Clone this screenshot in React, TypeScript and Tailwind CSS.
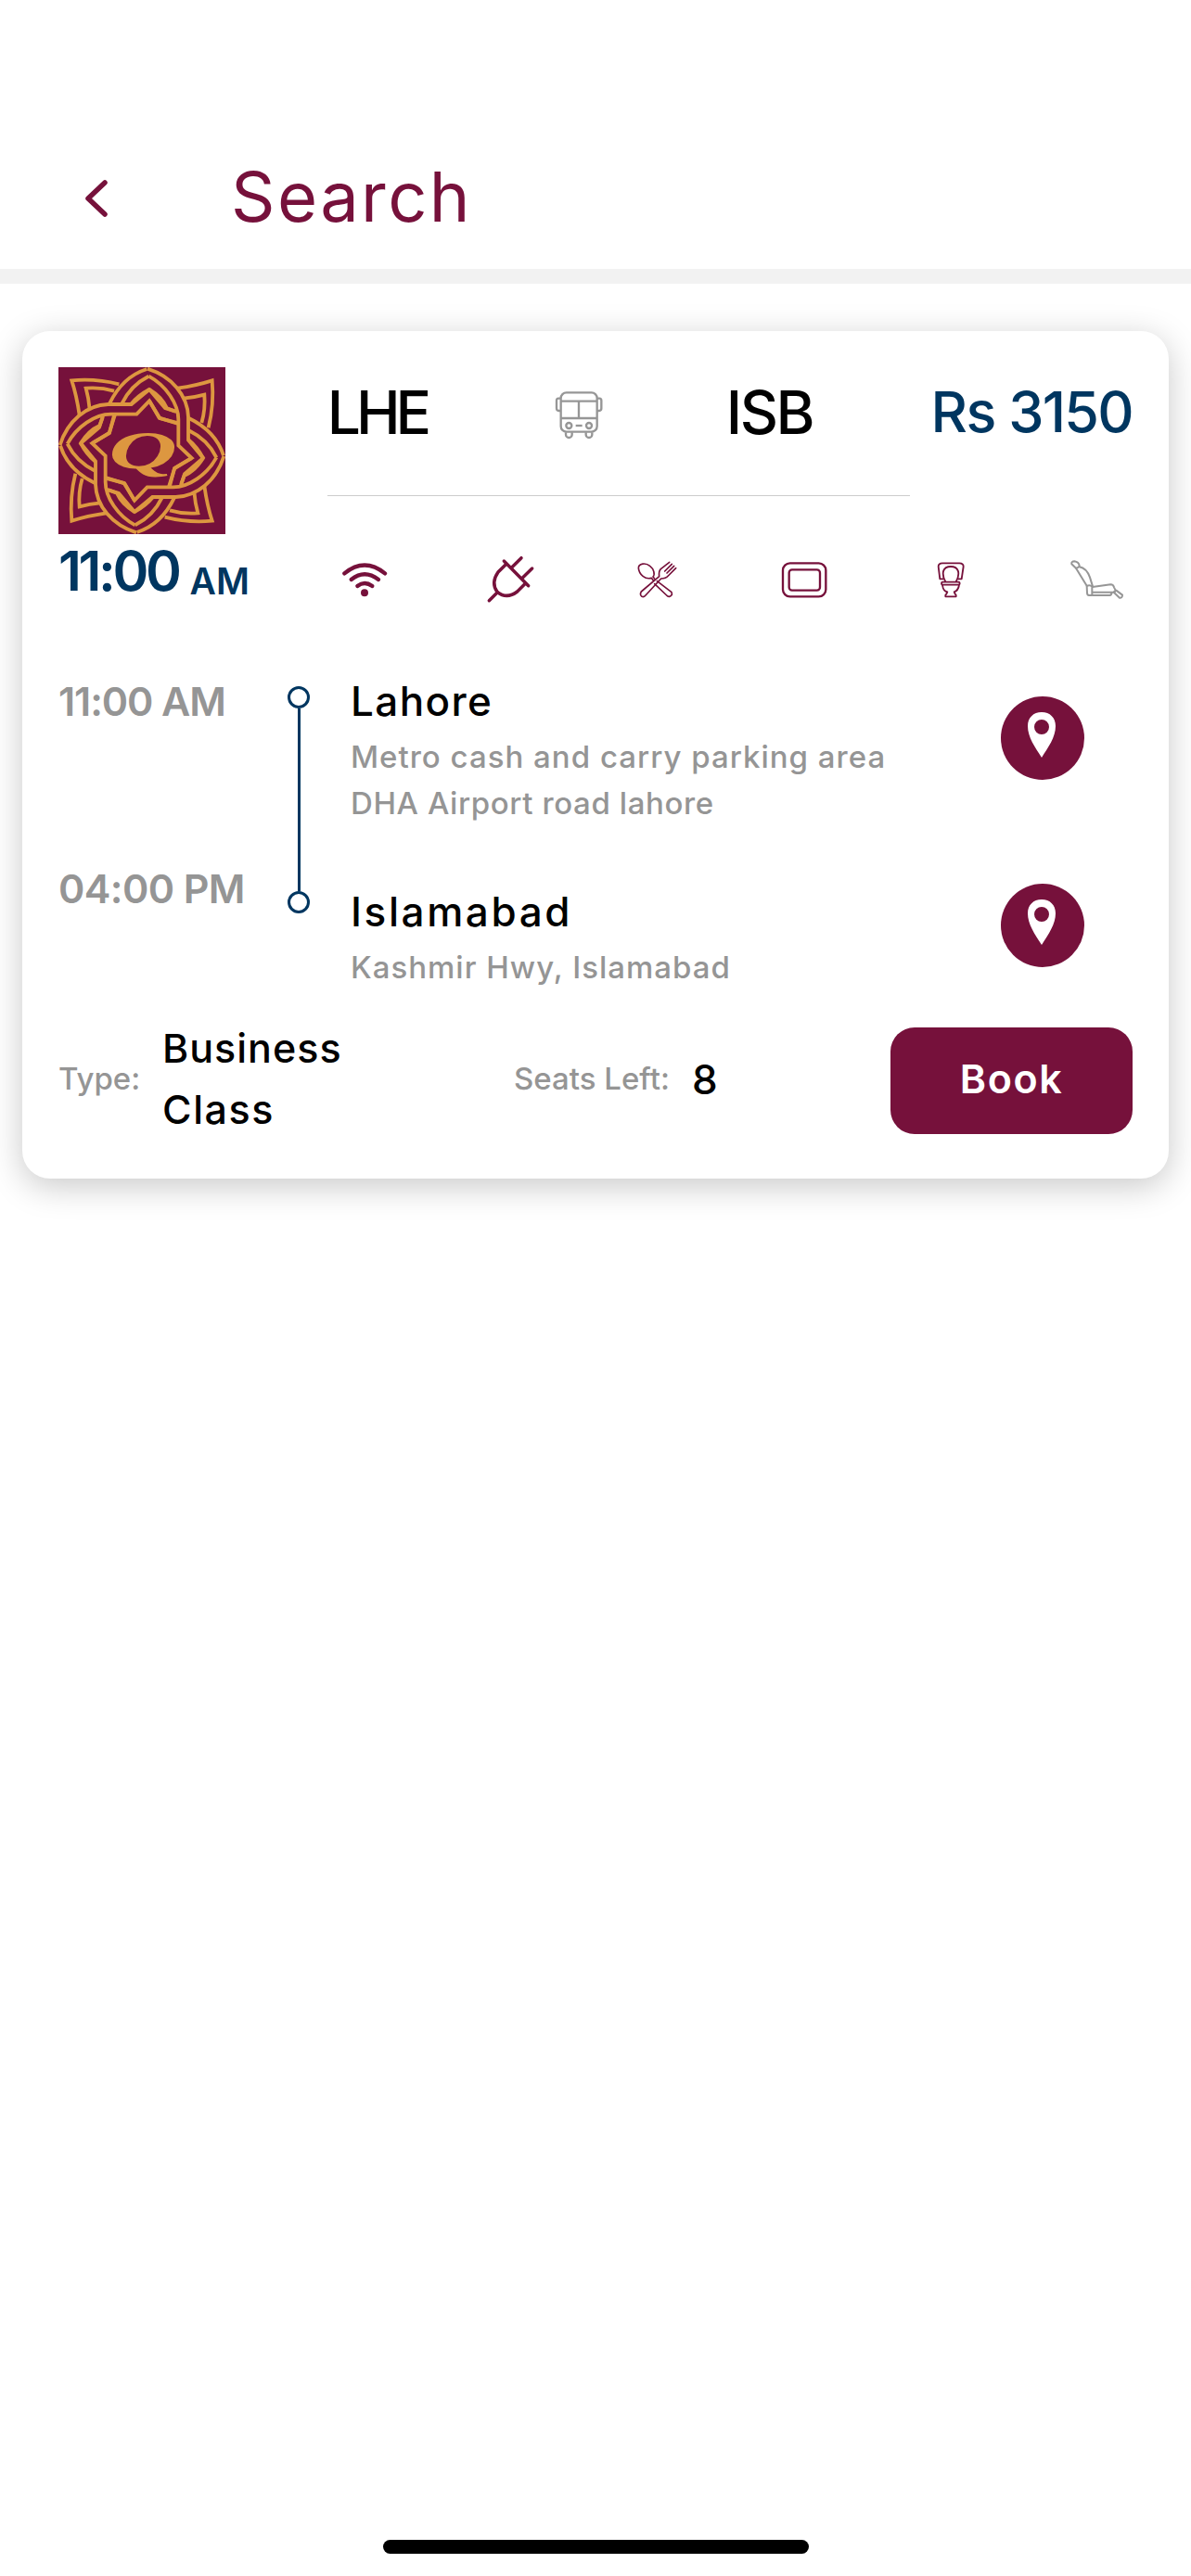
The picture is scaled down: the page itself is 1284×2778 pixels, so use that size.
import type { ReactNode } from "react";

const stops = [
  {
    city: "Lahore",
    cityTracking: "tracking-[1.4px]",
    address: [
      { text: "Metro cash and carry parking area", tracking: "tracking-[1px]" },
      { text: "DHA Airport road lahore", tracking: "tracking-[0.6px]" },
    ],
  },
  {
    city: "Islamabad",
    cityTracking: "tracking-[2.6px]",
    address: [{ text: "Kashmir Hwy, Islamabad", tracking: "tracking-[1px]" }],
  },
];

function BackIcon() {
  return (
    <svg className="mt-[3px] h-[44px] w-[28px]" viewBox="0 0 28 44" fill="none" stroke="#76113b" strokeWidth="5.5" strokeLinecap="round" strokeLinejoin="round">
      <path d="M24 5 L6 22 L24 39" />
    </svg>
  );
}

function OperatorLogo() {
  return (
    <svg className="h-[180px] w-[180px] bg-[#76113b]" viewBox="39 48 540 540" fill="none" stroke="#dd9740" strokeWidth="11.5" strokeLinejoin="miter">
      {[0, 90, 180, 270].map((angle) => (
        <g key={angle} transform={`rotate(${angle} 309 318)`}>
          <path d="M235 103 Q160 84 82 91 Q98 140 107 203" />
          <path d="M219 125 Q175 112 128 116 Q137 148 140 184" />
          <path d="M44 300 C68 222 130 170 200 168 L275 168 L333 120 Q374 145 390 181 L417 191" />
          <path d="M68 296 C98 240 158 200 208 200 L292 200 L333 157 L367 213 L427 229" />
          <path d="M325 54 Q246 79 204 166" />
          <path d="M331 77 Q273 106 244 166" />
          <path d="M333 120 Q297 139 273 168" />
          <path d="M222 201 L203 262 L148 294" />
          <path d="M183 206 L171 243 L111 294" />
        </g>
      ))}
      <text
        transform="translate(202 374) scale(1.78 1)"
        className="font-['Liberation_Serif',serif] text-[172px] font-bold italic"
        fill="#dd9740"
        stroke="none"
      >
        Q
      </text>
    </svg>
  );
}

function BusIcon() {
  return (
    <svg className="mt-[7px] h-[54px] w-[54px]" viewBox="110 66 162 162" fill="none" stroke="#969696" strokeWidth="7">
      <rect x="133" y="73" width="117" height="127" rx="18" />
      <path d="M134 101 H249 M134 156 H249 M191 101 V156" />
      <path d="M133 92 H125 Q119 92 119 99 V124 Q119 132 126 132 H133 M250 92 H258 Q264 92 264 99 V124 Q264 132 257 132 H250" />
      <circle cx="159" cy="180" r="9" />
      <circle cx="224" cy="180" r="9" />
      <path d="M181 180 H202" />
      <path d="M149 202 V209 A9 9 0 0 0 169 209 V202 M214 202 V209 A9 9 0 0 0 234 209 V202" />
    </svg>
  );
}

function WifiIcon() {
  return (
    <svg className="h-[40px] w-[50px]" viewBox="80 75 150 120" fill="none" stroke="#76113b" strokeWidth="13" strokeLinecap="round">
      <path d="M90 115 Q155 62 221 115" />
      <path d="M112 135 Q155 101 200 135" />
      <path d="M132 156 Q155 138 180 156" />
      <circle cx="155" cy="178" r="12" fill="#76113b" stroke="none" />
    </svg>
  );
}

function PlugIcon() {
  return (
    <svg className="h-[54px] w-[54px]" viewBox="553 55 162 162" fill="none" stroke="#76113b" strokeWidth="10.5" strokeLinecap="round">
      <path d="M611 76 L690 156 M636 97 L667 66 M669 132 L702 100 M563 204 L590 177" />
      <path d="M617 87 L592 112 Q568 146 589 176 Q620 201 654 175 L680 149" />
    </svg>
  );
}

function FoodIcon() {
  return (
    <svg className="h-[42px] w-[45px]" viewBox="79 72 135 126" fill="none" stroke="#76113b" strokeWidth="5" strokeLinecap="round" strokeLinejoin="round">
      <path d="M128 130 C108 136 88 119 86 98 C86 82 110 80 123 91 C136 101 140 118 133 126 L138 132 M128 130 L134 138 M146 140 L193 176 Q197 187 186 190 Q181 191 177 186 L138 149" />
      <path d="M186 79 L158 101 Q151 108 153 125 L95 174 Q89 184 97 190 Q103 193 109 186 L159 132 Q174 132 182 123 L207 98 M194 85 L171 108 M201 91 L178 114 M123 150 L119 154" />
    </svg>
  );
}

function ScreenIcon() {
  return (
    <svg className="h-[40px] w-[50px]" viewBox="545 73 150 120" fill="none" stroke="#76113b" strokeWidth="7">
      <rect x="551" y="80" width="139" height="108" rx="23" />
      <rect x="571" y="101" width="100" height="67" rx="10" />
    </svg>
  );
}

function ToiletIcon() {
  return (
    <svg className="h-[40px] w-[30px]" viewBox="150 73 90 120" fill="none" stroke="#76113b" strokeWidth="5.5" strokeLinejoin="round">
      <path d="M172 131 H160 L155 91 Q155 80 168 80 H223 Q236 80 236 91 L230 131 H218" />
      <path d="M178 140 C163 112 170 91 195 91 C220 91 227 112 212 140" />
      <rect x="165" y="141" width="59" height="9" rx="4" />
      <path d="M168 151 Q170 170 184 173 Q182 180 178 183 V188 H212 V183 Q208 180 206 173 Q219 169 222 151" />
    </svg>
  );
}

function ReclinerIcon() {
  return (
    <svg className="h-[42px] w-[60px]" viewBox="582 70 180 126" fill="none" stroke="#969696" strokeWidth="6" strokeLinejoin="round">
      <path d="M603 96 L589 83 Q587 74 598 74 Q612 76 614 88 Q614 94 603 96 Z" />
      <path d="M603 96 L638 153 M614 92 Q637 96 648 126 L657 155" />
      <path d="M638 154 Q648 149 655 156 V184 H645 Q639 184 639 176 Z" />
      <path d="M656 157 L715 149 Q724 149 726 158 L731 168 L724 174 H656 M656 184 H712 Q718 184 719 174" />
      <path d="M733 168 L753 183 Q753 193 744 192 L726 175 Z" />
    </svg>
  );
}

function LocationButton() {
  return (
    <button className="flex h-[90px] w-[90px] justify-center rounded-full bg-[#76113b] pt-[17px] pr-[2px]" aria-label="Show on map">
      <svg className="h-[49px] w-[30px]" viewBox="0 0 30 49">
        <path
          fill="#fff"
          fillRule="evenodd"
          d="M15 0 C6 0 0 6 0 15 C0 27 8 38 15 49 C22 38 30 27 30 15 C30 6 24 0 15 0 Z M15 8 A8 8 0 1 1 15 24 A8 8 0 1 1 15 8 Z"
        />
      </svg>
    </button>
  );
}

function Amenity({ children }: { children: ReactNode }) {
  return <div className="flex h-[60px] w-[76px] items-center justify-center">{children}</div>;
}

export default function App() {
  return (
    <div className="flex h-[2778px] w-[1284px] flex-col bg-white font-['Inter',sans-serif] font-medium whitespace-nowrap text-black">
      <header className="flex h-[306px] items-center border-b-[16px] border-[#f2f2f2] pt-[134px] pl-[89px] text-[#76113b]">
        <BackIcon />
        <h1 className="ml-[132px] text-[74px] leading-none font-normal tracking-[2.4px]">Search</h1>
      </header>

      <main className="mx-6 mt-[51px] h-[914px] rounded-[30px] bg-white px-[39px] pt-[39px] shadow-[0_8px_36px_rgba(0,0,0,0.22)]">
        <section className="flex h-[261px]">
          <div className="w-[290px]">
            <OperatorLogo />
            <div className="flex h-[81px] items-center font-semibold text-[#003660]">
              <span className="text-[59px] tracking-[-3.4px]">11:00</span>
              <span className="ml-[12px] pt-[21px] text-[39px]">AM</span>
            </div>
          </div>
          <div className="w-[869px]">
            <div className="flex h-[97px] items-center">
              <span className="w-[244px] text-[64px] tracking-[-5px]">LHE</span>
              <BusIcon />
              <span className="ml-[132px] text-[64px] tracking-[-2.5px]">ISB</span>
              <span className="ml-auto text-[61px] tracking-[-1.7px] text-[#003660]">Rs 3150</span>
            </div>
            <div className="mt-[41px] h-px w-[628px] bg-[#cccccc]" />
            <div className="mt-[60px] flex justify-between pl-[2px]">
              <Amenity><WifiIcon /></Amenity>
              <Amenity><PlugIcon /></Amenity>
              <Amenity><FoodIcon /></Amenity>
              <Amenity><ScreenIcon /></Amenity>
              <Amenity><ToiletIcon /></Amenity>
              <Amenity><ReclinerIcon /></Amenity>
            </div>
          </div>
        </section>

        <section className="mt-[69px] flex h-[342px]">
          <div className="flex w-[247px] flex-col gap-[142px] text-[43px] leading-[60px] font-semibold text-[#959595]">
            <span className="tracking-[-1.1px]">11:00 AM</span>
            <span className="tracking-[-0.6px]">04:00 PM</span>
          </div>
          <div className="flex w-[24px] flex-col items-center pt-[14px]">
            <div className="h-[24px] w-[24px] rounded-full border-[3px] border-[#003660]" />
            <div className="h-[197px] w-[3px] bg-[#003660]" />
            <div className="h-[24px] w-[24px] rounded-full border-[3px] border-[#003660]" />
          </div>
          <div className="ml-[44px] flex w-[701px] flex-col gap-[62px]">
            {stops.map((stop) => (
              <div key={stop.city}>
                <h2 className={`mb-[5px] text-[44px] leading-[60px] ${stop.cityTracking}`}>{stop.city}</h2>
                {stop.address.map((line) => (
                  <p key={line.text} className={`text-[33px] leading-[50px] text-[#959595] ${line.tracking}`}>
                    {line.text}
                  </p>
                ))}
              </div>
            ))}
          </div>
          <div className="flex flex-col gap-[112px] pt-[25px]">
            <LocationButton />
            <LocationButton />
          </div>
        </section>

        <footer className="mt-[40px] flex h-[115px] items-center">
          <span className="w-[112px] pb-1 text-[33px] text-[#959595]">Type:</span>
          <div className="w-[379px] pb-[6px] text-[43px] leading-[66px]">
            <p className="tracking-[1px]">Business</p>
            <p className="tracking-[1.6px]">Class</p>
          </div>
          <span className="w-[192px] pb-1 text-[33px] text-[#959595]">Seats Left:</span>
          <span className="pb-1 text-[44px]">8</span>
          <button className="ml-auto h-[115px] w-[261px] rounded-[26px] bg-[#76113b] pb-1 text-[43px] font-semibold tracking-[1.6px] text-white">
            Book
          </button>
        </footer>
      </main>

      <div className="mt-auto mb-[24px] h-[15px] w-[459px] self-center rounded-full bg-black" />
    </div>
  );
}
